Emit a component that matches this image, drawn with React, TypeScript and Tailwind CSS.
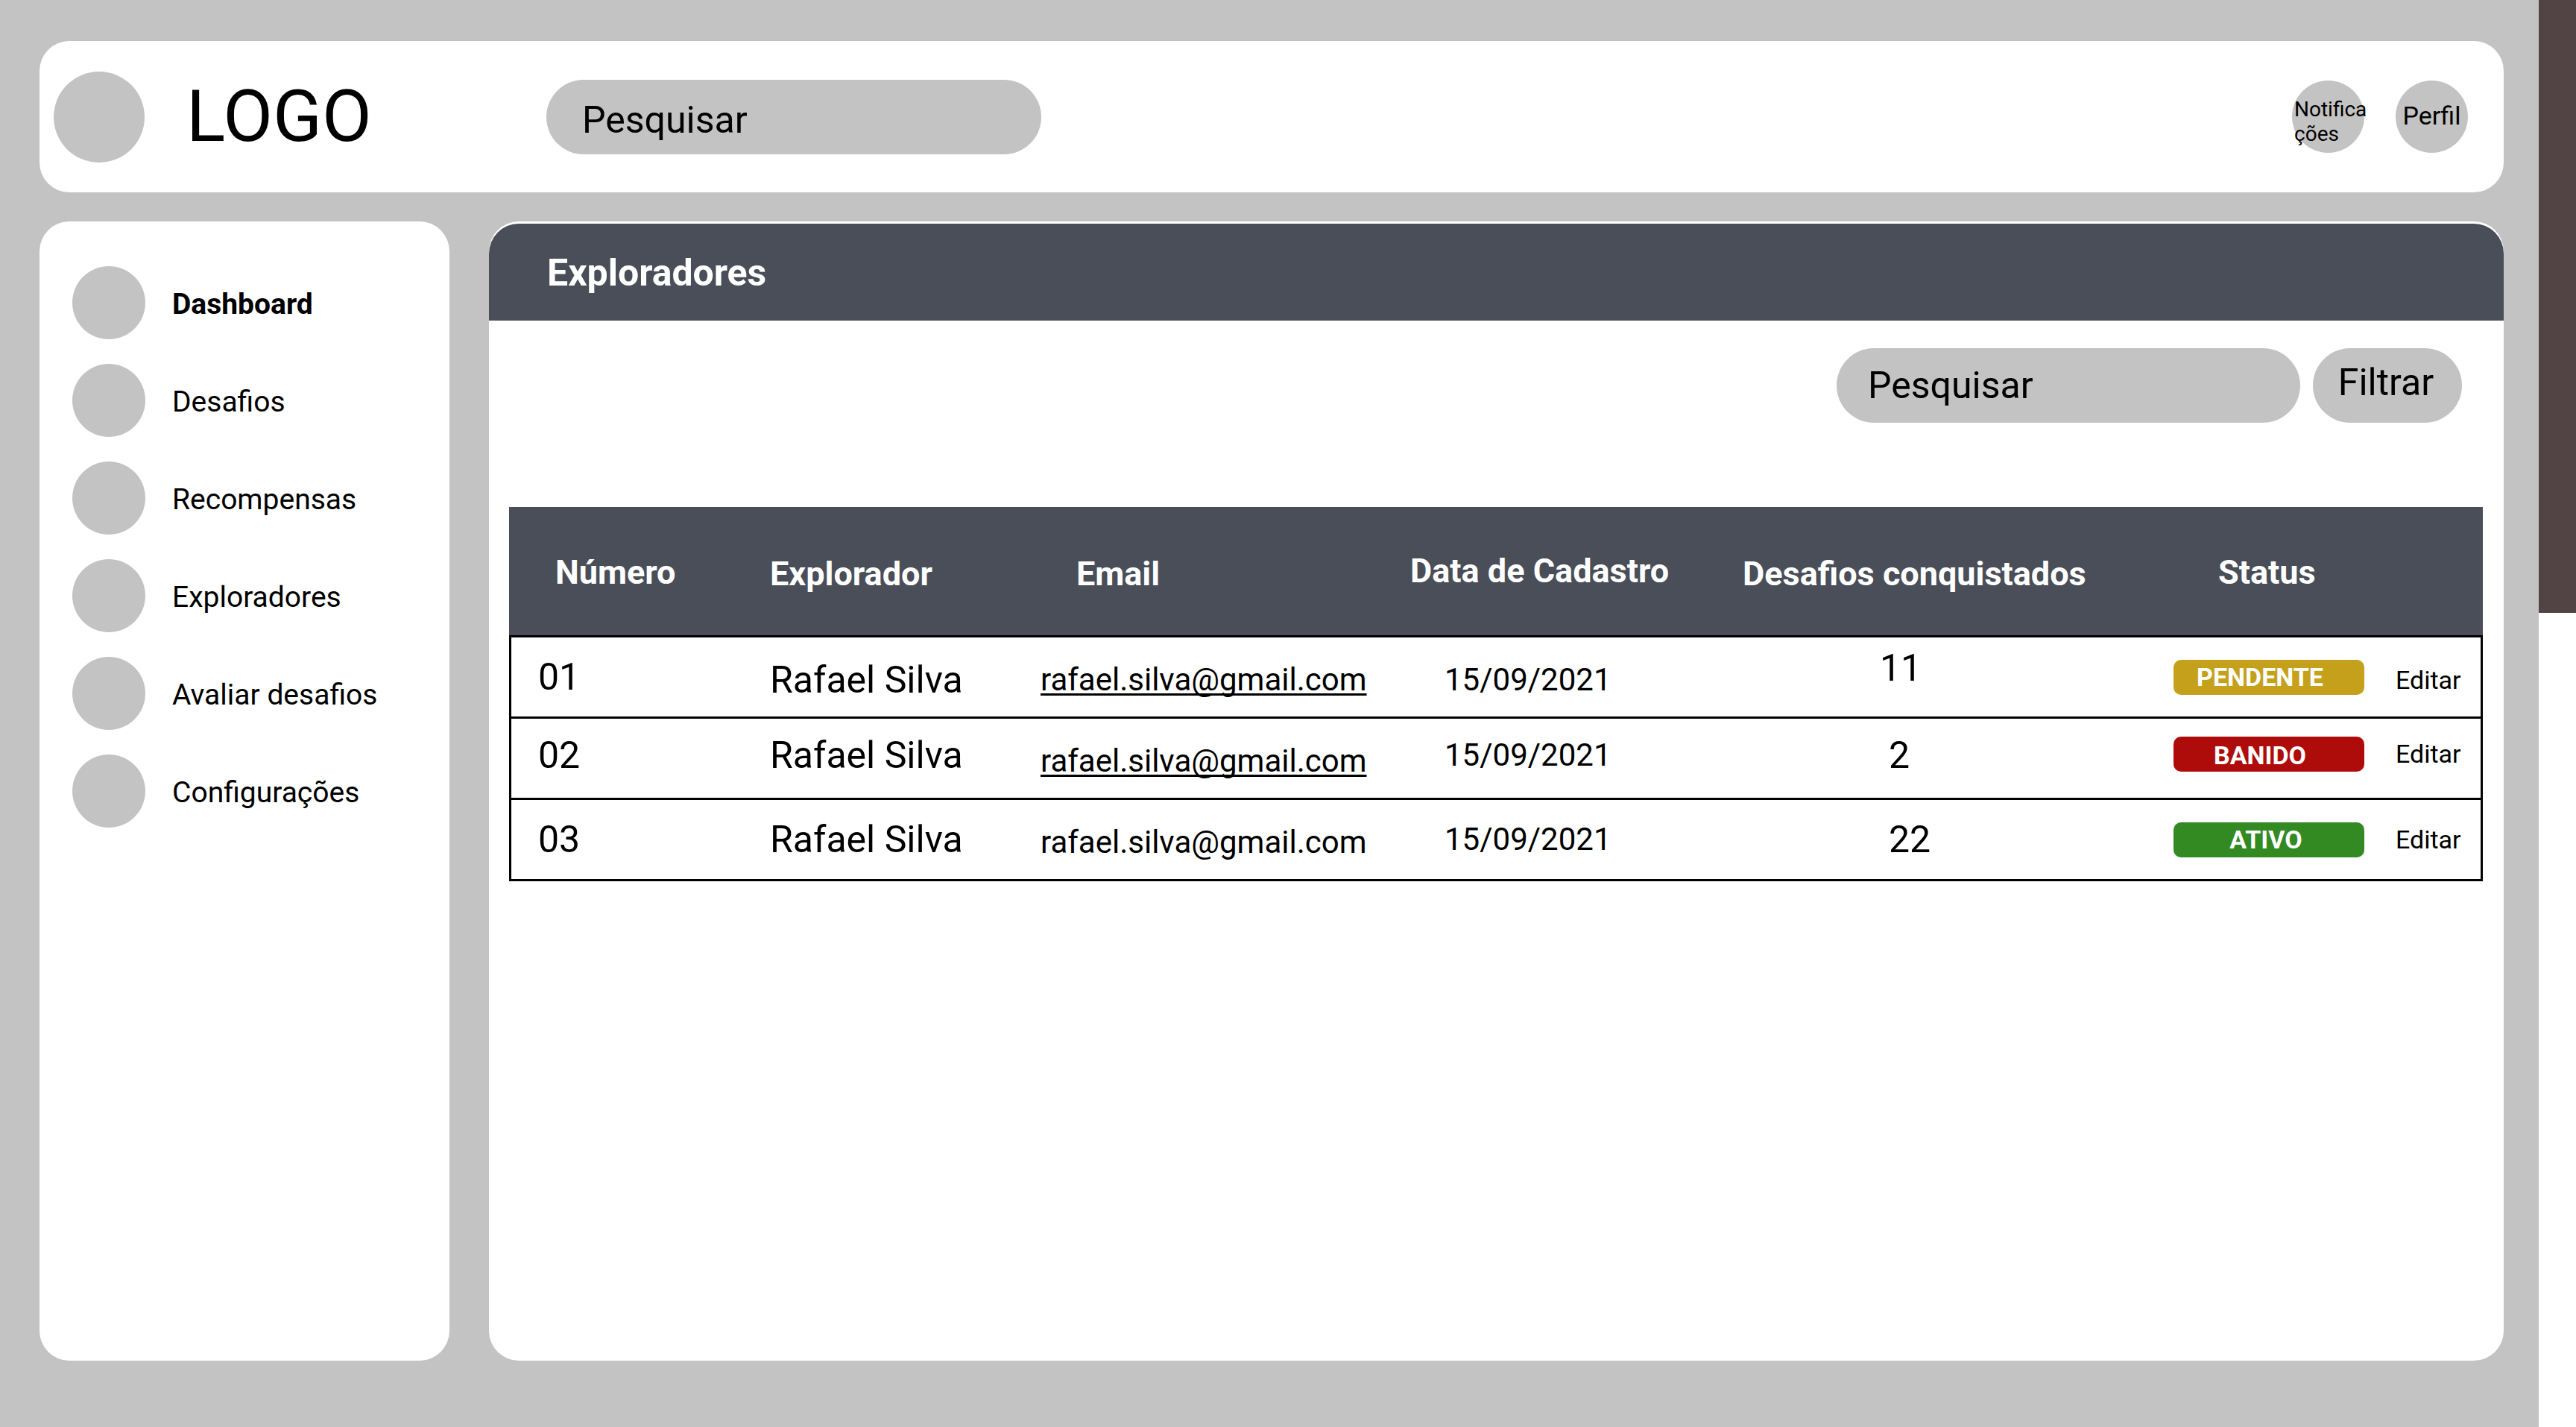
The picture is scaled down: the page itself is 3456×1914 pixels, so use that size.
type Cell = { text: string; place?: string };

type Explorer = {
  id: Cell;
  name: Cell;
  email: Cell;
  date: Cell;
  count: Cell;
  status: Cell;
  badge: string;
  edit: Cell;
};

const navItems = [
  "Dashboard",
  "Desafios",
  "Recompensas",
  "Exploradores",
  "Avaliar desafios",
  "Configurações",
];

const columnWidths = [
  "w-[350px]",
  "w-[363px]",
  "w-[496px]",
  "w-[446px]",
  "w-[578px]",
  "w-[298px]",
  "w-[117px]",
];

// Vertical placement of cell content within a row.
const LOW = "pt-2";
const MIDDLE = "";
const HIGH = "pb-2";
const TOP = "pb-6";

const explorers: Explorer[] = [
  {
    id: { text: "01", place: MIDDLE },
    name: { text: "Rafael Silva", place: LOW },
    email: { text: "rafael.silva@gmail.com", place: "underline" },
    date: { text: "15/09/2021", place: LOW },
    count: { text: "11", place: `${TOP} pl-46` },
    status: { text: "PENDENTE", place: MIDDLE },
    badge: "bg-[#c5a11b] pr-6",
    edit: { text: "Editar", place: LOW },
  },
  {
    id: { text: "02", place: HIGH },
    name: { text: "Rafael Silva", place: HIGH },
    email: { text: "rafael.silva@gmail.com", place: "underline" },
    date: { text: "15/09/2021", place: HIGH },
    count: { text: "2", place: `${HIGH} pl-49` },
    status: { text: "BANIDO", place: "pb-3" },
    badge: "bg-[#ae0c0a] pr-6 pt-1",
    edit: { text: "Editar", place: "pb-3" },
  },
  {
    id: { text: "03", place: MIDDLE },
    name: { text: "Rafael Silva", place: MIDDLE },
    email: { text: "rafael.silva@gmail.com", place: "no-underline" },
    date: { text: "15/09/2021", place: MIDDLE },
    count: { text: "22", place: `${MIDDLE} pl-49` },
    status: { text: "ATIVO", place: MIDDLE },
    badge: "bg-[#338922] pr-2",
    edit: { text: "Editar", place: MIDDLE },
  },
];

function Header() {
  return (
    <header className="flex h-[203px] items-center rounded-[40px] bg-white pl-[19px] pr-[48px]">
      <span className="size-[122px] shrink-0 rounded-full bg-[#c3c3c3]" />
      <span className="ml-[56px] w-[483px] text-[97px] leading-none">LOGO</span>
      <input
        type="search"
        aria-label="Pesquisar"
        placeholder="Pesquisar"
        className="h-[100px] w-[664px] rounded-full bg-[#c3c3c3] pl-[48px] pr-8 pt-2 text-[50px] outline-none placeholder:text-black placeholder:opacity-100"
      />
      <div className="ml-auto flex gap-[42px]">
        <button
          type="button"
          className="size-[97px] whitespace-nowrap rounded-full bg-[#c3c3c3] pl-[3px] pt-3 text-left text-[28px] leading-[33px]"
        >
          Notifica
          <br />
          ções
        </button>
        <button
          type="button"
          className="size-[97px] rounded-full bg-[#c3c3c3] pb-1 text-[34px] leading-[40px]"
        >
          Perfil
        </button>
      </div>
    </header>
  );
}

function Sidebar() {
  return (
    <nav
      aria-label="Principal"
      className="flex w-[550px] shrink-0 flex-col gap-[33px] rounded-[40px] bg-white pl-[44px] pt-[60px]"
    >
      {navItems.map((item, i) => (
        <a key={item} href="#" className="flex items-center gap-[36px]">
          <span className="size-[98px] rounded-full bg-[#c3c3c3]" />
          <span className={i === 0 ? "pt-1 text-[39px] font-bold" : "pt-1 text-[39px]"}>
            {item}
          </span>
        </a>
      ))}
    </nav>
  );
}

function ExplorersTable() {
  const cell = "h-[109px] border-b-3 border-black p-0 align-middle leading-none";
  return (
    <table className="w-full table-fixed border-separate border-spacing-0 text-left">
      <colgroup>
        {columnWidths.map((w, i) => (
          <col key={i} className={w} />
        ))}
      </colgroup>
      <thead>
        <tr className="bg-[#494e58] text-[45px] text-white [&>th]:h-[175px] [&>th]:border-b-3 [&>th]:border-black [&>th]:font-bold">
          <th className="pl-[62px] pt-1">Número</th>
          <th className="pt-2">Explorador</th>
          <th className="pl-12 pt-2">Email</th>
          <th>Data de Cadastro</th>
          <th className="pt-2">Desafios conquistados</th>
          <th colSpan={2} className="pl-[60px] pt-1">
            Status
          </th>
        </tr>
      </thead>
      <tbody>
        {explorers.map((e) => (
          <tr key={e.id.text}>
            <td className={`${cell} border-l-3`}>
              <div className={`pl-9 text-[50px] ${e.id.place}`}>{e.id.text}</div>
            </td>
            <td className={cell}>
              <div className={`text-[50px] ${e.name.place}`}>{e.name.text}</div>
            </td>
            <td className={cell}>
              <div className="pt-2 text-[42px]">
                <a
                  href="mailto:rafael.silva@gmail.com"
                  className={`decoration-[3px] underline-offset-4 [text-decoration-skip-ink:none] ${e.email.place}`}
                >
                  {e.email.text}
                </a>
              </div>
            </td>
            <td className={cell}>
              <div className={`pl-[46px] text-[42px] ${e.date.place}`}>{e.date.text}</div>
            </td>
            <td className={cell}>
              <div className={`text-[50px] ${e.count.place}`}>{e.count.text}</div>
            </td>
            <td className={cell}>
              <div className={e.status.place}>
                <span
                  className={`flex h-[47px] w-[256px] items-center justify-center rounded-[10px] text-[34px] font-bold text-white ${e.badge}`}
                >
                  {e.status.text}
                </span>
              </div>
            </td>
            <td className={`${cell} border-r-3`}>
              <div className={`text-[34px] ${e.edit.place}`}>
                <button type="button">{e.edit.text}</button>
              </div>
            </td>
          </tr>
        ))}
      </tbody>
    </table>
  );
}

export default function App() {
  return (
    <div className="flex min-h-screen bg-white font-[Roboto,sans-serif] text-black">
      <div className="flex min-w-0 flex-1 flex-col gap-[39px] bg-[#c3c3c3] pb-[89px] pl-[53px] pr-[47px] pt-[55px]">
        <Header />
        <div className="flex flex-1 gap-[53px]">
          <Sidebar />
          <main className="min-w-0 flex-1 rounded-[40px] bg-white pt-[3px]">
            <h1 className="flex h-[130px] items-center rounded-t-[40px] bg-[#494e58] pl-[78px] pt-[2px] text-[50px] font-bold text-white">
              Exploradores
            </h1>
            <div className="flex justify-end gap-[17px] pr-[56px] pt-[37px]">
              <input
                type="search"
                aria-label="Pesquisar exploradores"
                placeholder="Pesquisar"
                className="h-[100px] w-[622px] rounded-full bg-[#c3c3c3] pl-[42px] pr-8 text-[50px] outline-none placeholder:text-black placeholder:opacity-100"
              />
              <button
                type="button"
                className="h-[100px] w-[200px] rounded-full bg-[#c3c3c3] pb-2 pr-1 text-[50px]"
              >
                Filtrar
              </button>
            </div>
            <div className="pl-[27px] pr-[28px] pt-[113px]">
              <ExplorersTable />
            </div>
          </main>
        </div>
      </div>
      <div className="w-[50px] shrink-0">
        <div className="h-[822px] bg-[#524444]" />
      </div>
    </div>
  );
}
